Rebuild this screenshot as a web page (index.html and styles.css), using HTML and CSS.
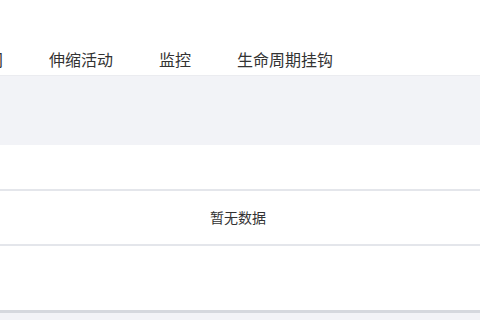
FILE: index.html
```html
<!DOCTYPE html>
<html lang="zh-CN">

<head>
     <meta charset="UTF-8">
     <meta name="viewport" content="width=device-width, initial-scale=1.0">
     <title>伸缩组详情</title>
     <link rel="stylesheet" href="styles.css">
</head>

<body>
     <nav class="tabs">
          <a class="tab" href="#">执行时间</a>
          <a class="tab" href="#">伸缩活动</a>
          <a class="tab" href="#">监控</a>
          <a class="tab" href="#">生命周期挂钩</a>
     </nav>

     <section class="toolbar"></section>

     <div class="table">
          <div class="table-head"></div>
          <div class="table-empty">暂无数据</div>
          <div class="table-foot"></div>
     </div>

     <footer class="bottom"></footer>
</body>

</html>
```

FILE: styles.css
```css
:root {
     --FONT-FAMILY: "Noto Sans CJK SC", "Noto Sans", sans-serif;
     --TEXT-color: #333;
     --LINE-color: #e4e6eb;
     --BAND-color: #f2f3f7;
}

/** Généralités **/
* {
     margin: 0;
     padding: 0;
}

*,
*::before,
*::after {
     box-sizing: border-box;
}

html,
body {
     background: #fff;
     overflow: hidden;
}

body {
     font-family: var(--FONT-FAMILY);
     color: var(--TEXT-color);
     width: 480px;
     height: 320px;
}

/** onglets **/
.tabs {
     display: flex;
     gap: 46px;
     height: 76px;
     padding-top: 47px;
     border-bottom: 1px solid #ebecf0;
     margin-left: -61px;
     white-space: nowrap;
}

.tab {
     font-size: 16px;
     line-height: 24px;
     color: var(--TEXT-color);
     text-decoration: none;
}

/** bandeau gris **/
.toolbar {
     height: 69px;
     background-color: var(--BAND-color);
}

/** tableau vide **/
.table-head {
     height: 46px;
     border-bottom: 2px solid var(--LINE-color);
}

.table-empty {
     height: 55px;
     line-height: 53px;
     padding-right: 4px;
     text-align: center;
     font-size: 14px;
     border-bottom: 2px solid var(--LINE-color);
}

.table-foot {
     height: 67px;
     border-bottom: 3px solid #d5d8de;
}

.bottom {
     height: 7px;
     background-color: var(--BAND-color);
}
```
